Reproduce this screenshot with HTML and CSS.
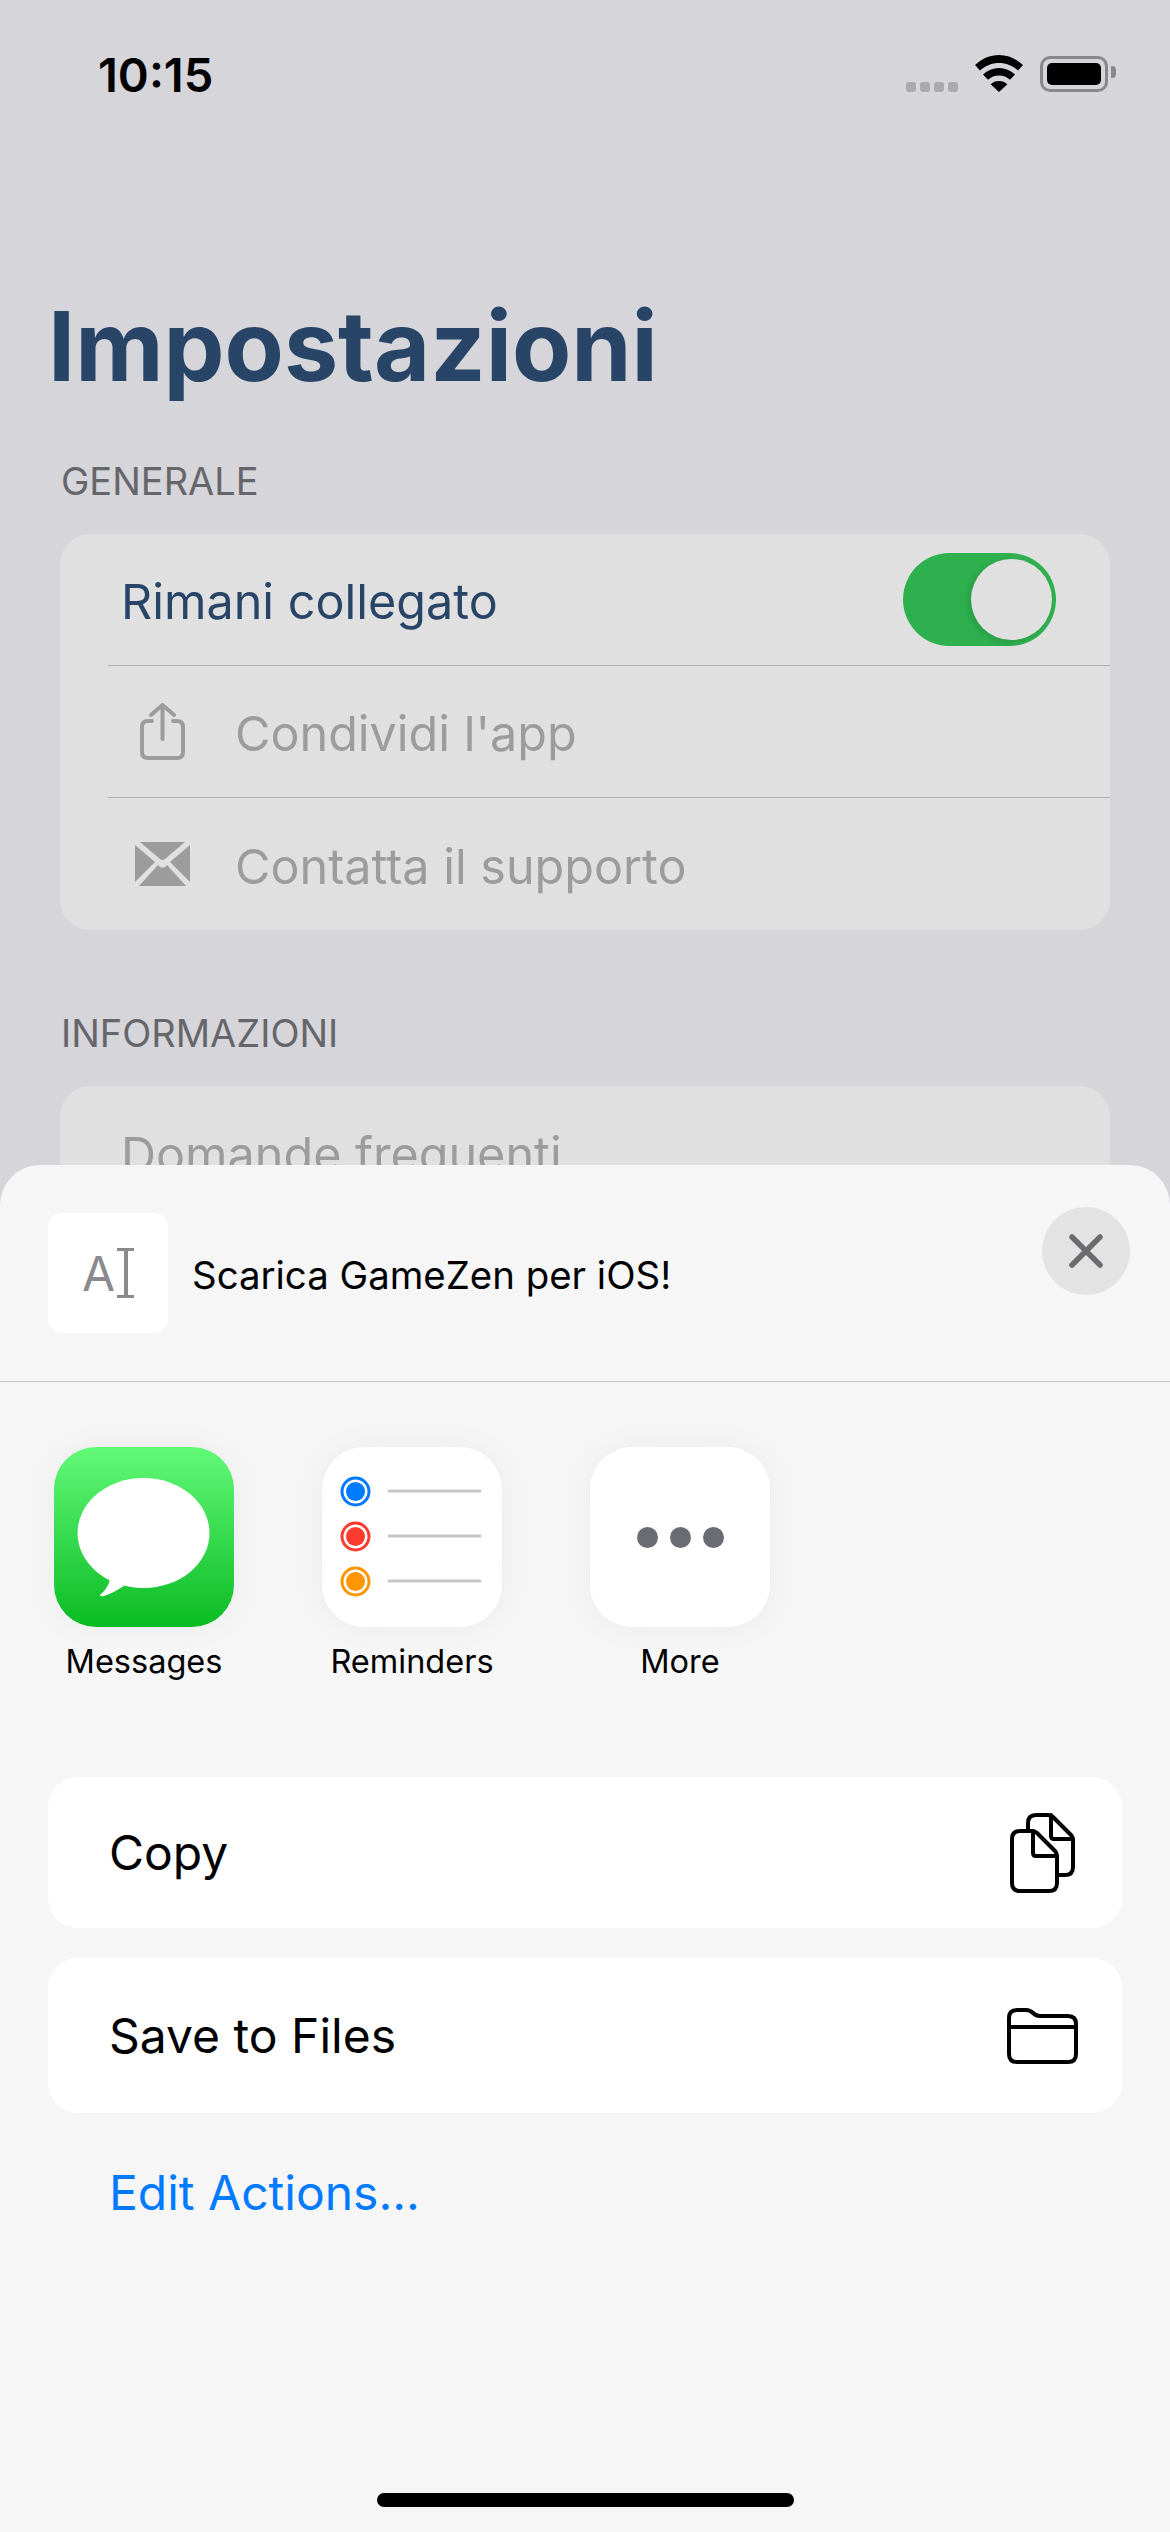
FILE: index.html
```html
<!DOCTYPE html>
<html lang="en">
<head>
  <meta charset="UTF-8" />
  <meta name="viewport" content="width=device-width, initial-scale=1" />
  <title>Impostazioni</title>
  <link rel="stylesheet" href="styles.css">
</head>
<body>
  <div class="phone">
    <div class="status-bar">
      <span class="time">10:15</span>
      <div class="status-icons">
        <div class="signal"><i></i><i></i><i></i><i></i></div>
        <svg class="wifi" width="48" height="37" viewBox="0 0 48 37">
          <path d="M24 0C15 0 7 3.500 0 10l5 5.500C10.500 10.500 17 8 24 8s13.500 2.500 19 7.500l5-5.500C41 3.500 33 0 24 0z"/>
          <path d="M24 13c-6 0-11.500 2.200-16 6.500l5 5.300c3-2.800 6.800-4.300 11-4.300s8 1.500 11 4.300l5-5.300C35.500 15.200 30 13 24 13z"/>
          <path d="M24 26c-3.300 0-6.200 1.200-8.400 3.300L24 37l8.400-7.700C30.200 27.200 27.300 26 24 26z"/>
        </svg>
        <div class="battery"><div class="battery-level"></div></div>
      </div>
    </div>

    <h1 class="page-title">Impostazioni</h1>

    <h2 class="section-label">GENERALE</h2>
    <div class="card">
      <div class="row">
        <span class="row-title">Rimani collegato</span>
        <div class="toggle"><div class="toggle-thumb"></div></div>
      </div>
      <div class="row row-muted">
        <svg class="row-icon" width="55" height="57" viewBox="0 0 55 57" fill="none" stroke="#9c9c9c" stroke-width="4" stroke-linecap="round" stroke-linejoin="round">
          <path d="M27.500 2V36M16 12L27.500 2L39 12"/>
          <path d="M17 18H13Q7 18 7 24V49Q7 55 13 55H42Q48 55 48 49V24Q48 18 42 18H38"/>
        </svg>
        <span class="row-text">Condividi l'app</span>
      </div>
      <div class="row row-muted">
        <svg class="row-icon" width="55" height="44" viewBox="0 0 55 44" fill="#9c9c9c">
          <path d="M5 0H50L30 17Q27.500 19 25 17z"/>
          <path d="M0 3L20 20L0 40z"/>
          <path d="M55 3L35 20L55 40z"/>
          <path d="M4 44L23 23L25 25Q27.500 26.500 30 25L32 23L51 44z"/>
        </svg>
        <span class="row-text">Contatta il supporto</span>
      </div>
    </div>

    <h2 class="section-label section-label-second">INFORMAZIONI</h2>
    <div class="card">
      <div class="row row-muted row-plain"><span class="row-text">Domande frequenti</span></div>
    </div>

    <div class="sheet">
      <div class="sheet-header">
        <div class="thumb">
          <span class="thumb-letter">A</span>
          <span class="thumb-cursor"></span>
        </div>
        <span class="sheet-title">Scarica GameZen per iOS!</span>
        <div class="close-button">
          <svg width="36" height="36" viewBox="0 0 36 36" fill="none" stroke="#6b6b70" stroke-width="5.500" stroke-linecap="round">
            <path d="M4 4L32 32M32 4L4 32"/>
          </svg>
        </div>
      </div>

      <div class="apps">
        <div class="app">
          <div class="app-icon app-icon-messages">
            <svg width="180" height="180" viewBox="0 0 180 180" fill="#fff">
              <ellipse cx="89.500" cy="86" rx="66" ry="55"/>
              <path d="M52 126Q57 131 55 136Q52 143 46 148Q46 150 50 149Q62 145 74 136z"/>
            </svg>
          </div>
          <span class="app-name">Messages</span>
        </div>
        <div class="app">
          <div class="app-icon">
            <svg width="180" height="180" viewBox="0 0 180 180" fill="none">
              <circle cx="33.500" cy="44.500" r="13.500" stroke="#007aff" stroke-width="3"/>
              <circle cx="33.500" cy="44.500" r="9.500" fill="#007aff"/>
              <circle cx="33.500" cy="89.500" r="13.500" stroke="#ff3b30" stroke-width="3"/>
              <circle cx="33.500" cy="89.500" r="9.500" fill="#ff3b30"/>
              <circle cx="33.500" cy="134.500" r="13.500" stroke="#ff9500" stroke-width="3"/>
              <circle cx="33.500" cy="134.500" r="9.500" fill="#ff9500"/>
              <path d="M67 44H158M67 89H158M67 134H158" stroke="#c5c5ca" stroke-width="3" stroke-linecap="round"/>
            </svg>
          </div>
          <span class="app-name">Reminders</span>
        </div>
        <div class="app">
          <div class="app-icon app-icon-more"><i></i><i></i><i></i></div>
          <span class="app-name">More</span>
        </div>
      </div>

      <div class="action action-copy">
        <span>Copy</span>
        <svg width="65" height="80" viewBox="0 0 65 80" fill="none" stroke="#000" stroke-width="4" stroke-linejoin="round" stroke-linecap="round">
          <path d="M10 18H22Q25 18 27 20L45 38Q47 40 47 43V70Q47 78 39 78H10Q2 78 2 70V26Q2 18 10 18z"/>
          <path d="M23 18V40Q23 43 26 43H47"/>
          <path d="M18 16V10Q18 2 26 2H38Q41 2 43 4L61 22Q63 24 63 27V54Q63 62 55 62H48"/>
          <path d="M41 2V23Q41 26 44 26H63"/>
        </svg>
      </div>
      <div class="action action-files">
        <span>Save to Files</span>
        <svg width="71" height="56" viewBox="0 0 71 56" fill="none" stroke="#000" stroke-width="4" stroke-linejoin="round">
          <path d="M2 10Q2 2 10 2H19Q23 2 26 5Q29 8 33 8H61Q69 8 69 16V46Q69 54 61 54H10Q2 54 2 46z"/>
          <path d="M2 19H69"/>
        </svg>
      </div>
      <div class="edit-actions">Edit Actions...</div>

      <div class="home-bar"></div>
    </div>
  </div>
</body>
</html>
```

FILE: styles.css
```css
* {
  box-sizing: border-box;
}
body {
  margin: 0;
  background: #d5d5da;
  font-family: Inter, 'Noto Sans', sans-serif;
}
.phone {
  position: relative;
  width: 1170px;
  height: 2532px;
  overflow: hidden;
  background: #d5d5da;
}

/* status bar */
.status-bar {
  display: flex;
  justify-content: space-between;
  align-items: flex-start;
  height: 100px;
  padding: 51px 55px 0 98px;
}
.time {
  font-size: 47px;
  line-height: 48px;
  font-weight: 600;
  color: #000;
}
.status-icons {
  display: flex;
  align-items: flex-end;
  gap: 17px;
  margin-top: 4px;
  margin-right: 7px;
}
.signal {
  display: flex;
  gap: 4px;
}
.signal i {
  width: 10px;
  height: 10px;
  border-radius: 3px;
  background: #a9a9ae;
}
.wifi {
  fill: #000;
}
.battery {
  position: relative;
  width: 68px;
  height: 36px;
  padding: 4px;
  border: 3px solid #88888c;
  border-radius: 10px;
}
.battery::after {
  content: "";
  position: absolute;
  right: -11px;
  top: 7px;
  width: 5px;
  height: 12px;
  background: #88888c;
  border-radius: 0 4px 4px 0;
}
.battery-level {
  height: 100%;
  background: #000;
  border-radius: 5px;
}

/* settings list */
.page-title {
  margin: 186px 0 0 48px;
  font-size: 96.800px;
  line-height: 120px;
  font-weight: 700;
  color: #284568;
}
.section-label {
  margin: 0;
  padding: 53px 0 0 61px;
  font-size: 38px;
  line-height: 44px;
  font-weight: 400;
  color: #66666a;
}
.section-label-second {
  padding-top: 81px;
}
.card {
  margin: 31px 60px 0;
  background: #e0e0e0;
  border-radius: 30px;
}
.row {
  display: flex;
  align-items: center;
  justify-content: space-between;
  height: 132px;
  margin-left: 48px;
  padding: 0 54px 0 13px;
  border-bottom: 1.5px solid #b0b0b0;
  font-size: 48.500px;
}
.row:last-child {
  border-bottom: none;
}
.row-title,
.row-text {
  padding-top: 4px;
}
.row-title {
  color: #284568;
}
.row-muted {
  justify-content: flex-start;
  gap: 45px;
  padding-left: 27px;
  color: #9c9c9c;
}
.row-plain {
  padding-left: 13px;
}
.toggle {
  position: relative;
  width: 153px;
  height: 93px;
  border-radius: 47px;
  background: #2eb04f;
}
.toggle-thumb {
  position: absolute;
  top: 6px;
  right: 4px;
  width: 81px;
  height: 81px;
  border-radius: 50%;
  background: #e0e0e0;
  box-shadow: -3px 2px 6px rgba(0,0,0,0.12);
}

/* share sheet */
.sheet {
  position: absolute;
  top: 1165px;
  left: 0;
  right: 0;
  bottom: 0;
  display: flex;
  flex-direction: column;
  background: #f6f6f7;
  border-radius: 40px 40px 0 0;
}
.sheet-header {
  display: flex;
  align-items: flex-start;
  height: 217px;
  padding: 42px 40px 0 48px;
  border-bottom: 1.5px solid #c4c4c6;
}
.thumb {
  display: flex;
  align-items: center;
  justify-content: center;
  width: 120px;
  height: 120px;
  margin-top: 6px;
  background: #fff;
  border-radius: 14px;
}
.thumb-letter {
  font-size: 48px;
  font-weight: 400;
  color: #8a8a8e;
}
.thumb-cursor {
  position: relative;
  width: 17px;
  height: 50px;
  margin-left: 2px;
  border-top: 3px solid #8a8a8e;
  border-bottom: 3px solid #8a8a8e;
}
.thumb-cursor::after {
  content: "";
  position: absolute;
  left: 6.500px;
  top: 0;
  bottom: 0;
  width: 4px;
  background: #8a8a8e;
}
.sheet-title {
  flex: 1;
  margin: 45px 0 0 24px;
  font-size: 38.400px;
  line-height: 46px;
  color: #000;
}
.close-button {
  display: flex;
  align-items: center;
  justify-content: center;
  width: 88px;
  height: 88px;
  border-radius: 50%;
  background: #e3e3e4;
}
.apps {
  display: flex;
  gap: 88px;
  margin-top: 65px;
  padding-left: 54px;
}
.app {
  display: flex;
  flex-direction: column;
  align-items: center;
  width: 180px;
}
.app-icon {
  width: 180px;
  height: 180px;
  background: #fff;
  border-radius: 42px;
  box-shadow: 0 0 32px rgba(0,0,0,0.05);
}
.app-icon-messages {
  background: linear-gradient(#63f978, #0abb23);
}
.app-icon-more {
  display: flex;
  align-items: center;
  justify-content: center;
  gap: 12px;
}
.app-icon-more i {
  width: 21px;
  height: 21px;
  border-radius: 50%;
  background: #6b6b74;
}
.app-name {
  margin-top: 15px;
  font-size: 32.500px;
  line-height: 40px;
  color: #000;
}
.action {
  display: flex;
  align-items: center;
  justify-content: space-between;
  margin: 0 48px;
  padding: 0 44px 0 61px;
  background: #fff;
  border-radius: 30px;
  font-size: 48px;
  color: #000;
}
.action-copy {
  height: 151px;
  margin-top: 95px;
  padding-right: 47px;
}
.action-files {
  height: 155px;
  margin-top: 30px;
}
.edit-actions {
  margin: 50px 0 0 109px;
  font-size: 48px;
  line-height: 60px;
  color: #007aff;
}
.home-bar {
  width: 417px;
  height: 14px;
  margin: auto auto 25px;
  background: #000;
  border-radius: 7px;
}
```
